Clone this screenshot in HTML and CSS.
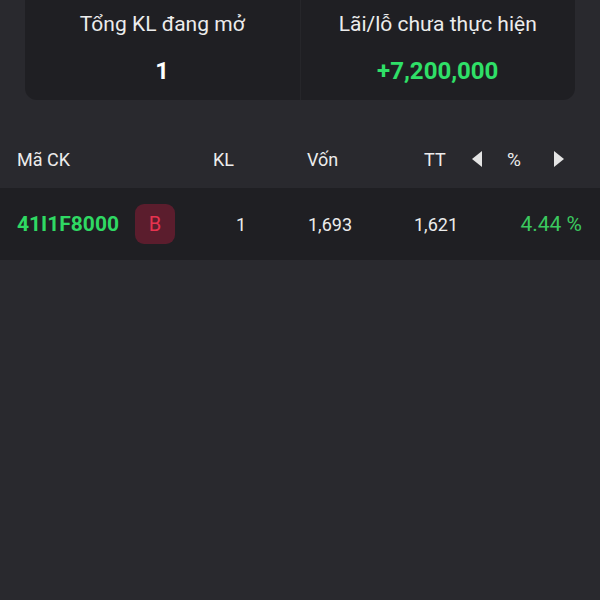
FILE: index.html
```html
<!DOCTYPE html>
<html lang="vi">
<head>
    <meta charset="UTF-8">
    <meta name="viewport" content="width=device-width, initial-scale=1.0">
    <title>Vị thế mở</title>
    <link rel="stylesheet" href="styles.css">
</head>
<body>

    <!-- Tổng quan vị thế -->
    <div class="summary">
        <div class="summary-item">
            <div class="summary-label">Tổng KL đang mở</div>
            <div class="summary-value">1</div>
        </div>
        <div class="summary-item">
            <div class="summary-label">Lãi/lỗ chưa thực hiện</div>
            <div class="summary-value up">+7,200,000</div>
        </div>
    </div>

    <!-- Tiêu đề bảng -->
    <div class="table-head">
        <span class="h-code">Mã CK</span>
        <span class="h-kl">KL</span>
        <span class="h-von">Vốn</span>
        <span class="h-tt">TT</span>
        <span class="arrow arrow-left"></span>
        <span class="h-pct">%</span>
        <span class="arrow arrow-right"></span>
    </div>

    <!-- Danh sách vị thế -->
    <div class="table-row">
        <span class="c-code">41I1F8000</span>
        <span class="badge-buy">B</span>
        <span class="c-kl">1</span>
        <span class="c-von">1,693</span>
        <span class="c-tt">1,621</span>
        <span class="c-pct">4.44 %</span>
    </div>

</body>
</html>
```

FILE: styles.css
```css
body {
    margin: 0;
    background-color: #29292e;
    color: #ececec;
    font-family: Roboto, "Noto Sans", sans-serif;
}
.summary {
    display: flex;
    margin: 0 25px;
    height: 100px;
    background-color: #1f1f23;
    border-radius: 0 0 12px 12px;
}
.summary-item {
    flex: 1;
    text-align: center;
    padding-top: 9px;
}
.summary-item + .summary-item {
    border-left: 1px solid #26262a;
}
.summary-label {
    font-size: 21px;
    line-height: 30px;
}
.summary-value {
    margin-top: 17px;
    font-size: 24px;
    font-weight: bold;
    line-height: 30px;
    color: #ffffff;
}
.up {
    color: #2fe068;
}
.table-head {
    display: flex;
    align-items: center;
    height: 58px;
    margin-top: 30px;
    padding-left: 17px;
    font-size: 18px;
}
.h-code {
    width: 196px;
}
.h-kl {
    width: 94px;
}
.h-von {
    width: 117px;
}
.h-tt {
    width: 48px;
}
.h-pct {
    width: 19px;
    margin: 0 20px 0 25px;
    font-size: 19px;
}
.arrow {
    width: 0;
    height: 0;
    border-top: 8px solid transparent;
    border-bottom: 8px solid transparent;
}
.arrow-left {
    border-right: 10px solid #e4e4e4;
}
.arrow-right {
    border-left: 10px solid #e4e4e4;
    margin-left: 8px;
}
.table-row {
    display: flex;
    align-items: center;
    height: 72px;
    padding: 0 18px 0 17px;
    background-color: #1f1f23;
    font-size: 18px;
}
.c-code {
    flex-shrink: 0;
    width: 118px;
    font-size: 21px;
    font-weight: bold;
    color: #2fd963;
}
.badge-buy {
    width: 40px;
    height: 40px;
    line-height: 40px;
    text-align: center;
    border-radius: 9px;
    background-color: #5b1d2d;
    color: #e8334f;
    font-size: 20px;
}
.c-kl {
    margin-left: 61px;
    width: 72px;
}
.c-von {
    width: 106px;
}
.c-tt {
    flex: 1;
}
.c-pct {
    color: #3bc85f;
    font-size: 21px;
}
```
